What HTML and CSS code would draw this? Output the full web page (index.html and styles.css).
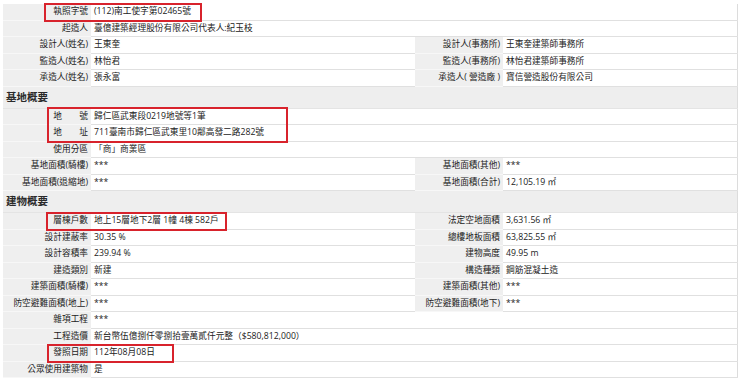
FILE: index.html
```html
<!DOCTYPE html>
<html lang="zh-Hant">
<head>
    <meta charset="UTF-8">
    <meta name="viewport" content="width=device-width, initial-scale=1.0">
    <title>建造執照</title>
    <link rel="stylesheet" href="styles.css">
</head>
<body>

<div class="page">
    <table class="info">
        <colgroup>
            <col class="c-label">
            <col class="c-value">
            <col class="c-label">
            <col class="c-value2">
        </colgroup>
        <tr><th>執照字號</th><td colspan="3">(112)南工使字第02465號</td></tr>
        <tr><th>起造人</th><td colspan="3">臺億建築經理股份有限公司代表人:紀玉枝</td></tr>
        <tr><th>設計人(姓名)</th><td>王東奎</td><th>設計人(事務所)</th><td>王東奎建築師事務所</td></tr>
        <tr><th>監造人(姓名)</th><td>林怡君</td><th>監造人(事務所)</th><td>林怡君建築師事務所</td></tr>
        <tr><th>承造人(姓名)</th><td>張永富</td><th>承造人( 營造廠 )</th><td>寶信營造股份有限公司</td></tr>

        <tr class="section"><td colspan="4">基地概要</td></tr>
        <tr><th>地&emsp;&emsp;號</th><td colspan="3">歸仁區武東段0219地號等1筆</td></tr>
        <tr><th>地&emsp;&emsp;址</th><td colspan="3">711臺南市歸仁區武東里10鄰高發二路282號</td></tr>
        <tr><th>使用分區</th><td colspan="3">「商」商業區</td></tr>
        <tr><th>基地面積(騎樓)</th><td>***</td><th>基地面積(其他)</th><td>***</td></tr>
        <tr><th>基地面積(退縮地)</th><td>***</td><th>基地面積(合計)</th><td>12,105.19 ㎡</td></tr>

        <tr class="section"><td colspan="4">建物概要</td></tr>
        <tr><th>層棟戶數</th><td>地上15層地下2層 1幢 4棟 582戶</td><th>法定空地面積</th><td>3,631.56 ㎡</td></tr>
        <tr><th>設計建蔽率</th><td>30.35 %</td><th>總樓地板面積</th><td>63,825.55 ㎡</td></tr>
        <tr><th>設計容積率</th><td>239.94 %</td><th>建物高度</th><td>49.95 m</td></tr>
        <tr><th>建造類別</th><td>新建</td><th>構造種類</th><td>鋼筋混凝土造</td></tr>
        <tr><th>建築面積(騎樓)</th><td>***</td><th>建築面積(其他)</th><td>***</td></tr>
        <tr><th>防空避難面積(地上)</th><td>***</td><th>防空避難面積(地下)</th><td>***</td></tr>
        <tr><th>雜項工程</th><td colspan="3">***</td></tr>
        <tr><th>工程造價</th><td colspan="3">新台幣伍億捌仟零捌拾壹萬貳仟元整（$580,812,000）</td></tr>
        <tr><th>發照日期</th><td colspan="3">112年08月08日</td></tr>
        <tr><th>公眾使用建築物</th><td colspan="3">是</td></tr>
    </table>

    <!-- annotation boxes -->
    <div class="mark mark-permit"></div>
    <div class="mark mark-land"></div>
    <div class="mark mark-floors"></div>
    <div class="mark mark-date"></div>
</div>

</body>
</html>
```

FILE: styles.css
```css
body {
    margin: 0;
    background: #fff;
    font-family: "Open Sans", "Noto Sans CJK TC", sans-serif;
    color: #222;
}
.page {
    position: relative;
    padding: 4px 3px 0 3px;
}
.info {
    width: 734px;
    border-collapse: collapse;
    table-layout: fixed;
    border-right: 1px solid #dcdcdc;
    font-size: 8.7px;
}
.c-label { width: 88px; }
.c-value { width: 324px; }
.c-value2 { width: 234px; }
.info th,
.info td {
    height: 15.5px;
    line-height: 15.5px;
    padding: 0;
    border-bottom: 1px solid #e0e0e0;
    white-space: nowrap;
    overflow: hidden;
}
.info th {
    background: #efefef;
    font-weight: normal;
    text-align: right;
    padding-right: 3px;
    border-bottom-color: #f7f7f7;
}
.info td {
    padding-left: 3px;
    background: #fff;
}
.info tr.section td {
    height: 21px;
    line-height: 21px;
    background: #eeeeee;
    font-size: 10.5px;
    font-weight: 600;
    color: #2a2a2a;
    padding-left: 3px;
    border-bottom: 1px solid #e4e4e4;
}
.mark {
    position: absolute;
    box-sizing: border-box;
    border: 2px solid #d8232c;
}
.mark-permit { left: 44px; top: 3px; width: 158px; height: 19px; }
.mark-land { left: 47px; top: 107px; width: 241px; height: 36px; }
.mark-floors { left: 46px; top: 212px; width: 181px; height: 19px; }
.mark-date { left: 47px; top: 344px; width: 127px; height: 19px; }
```
